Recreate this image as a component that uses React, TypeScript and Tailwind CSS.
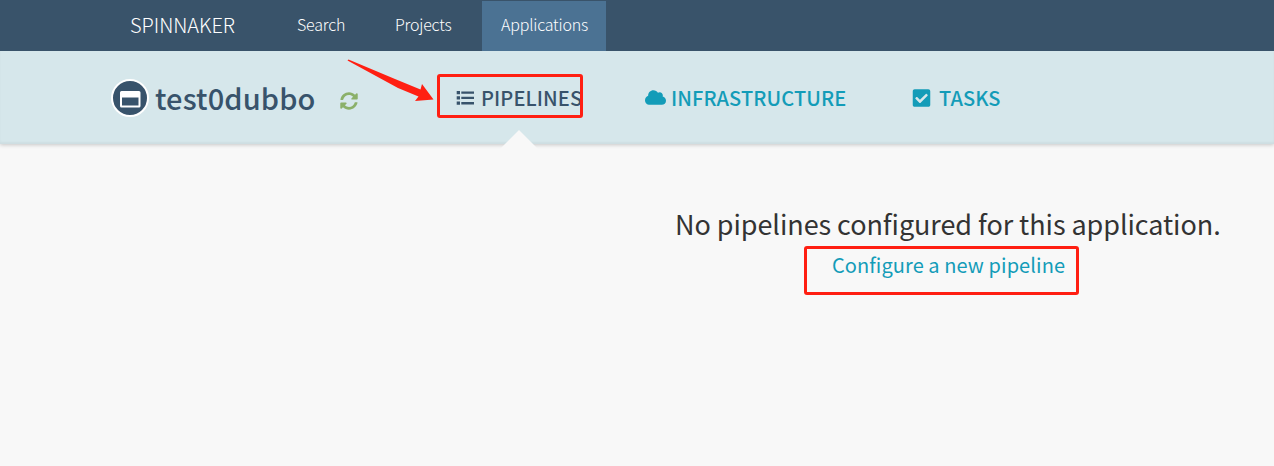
import React from "react";
import { FaCheckSquare, FaCloud, FaSyncAlt } from "react-icons/fa";

function AppIcon() {
  return (
    <svg viewBox="0 0 38 38" className="h-[38px] w-[38px] shrink-0">
      <circle cx="19" cy="19" r="18" fill="#38536b" stroke="#fff" strokeWidth="2" />
      <path
        fillRule="evenodd"
        fill="#fff"
        d="M10.500 12h17.500a1.500 1.500 0 0 1 1.500 1.500v13.500a1.500 1.500 0 0 1-1.500 1.500h-17.500a1.500 1.500 0 0 1-1.500-1.500v-13.500a1.500 1.500 0 0 1 1.500-1.500zM11 18.500v8h16.500v-8z"
      />
    </svg>
  );
}

function ListIcon() {
  return (
    <svg viewBox="0 0 18 14" className="h-[14px] w-[18px]" fill="currentColor">
      <path d="M.7 0H4v3.200H.7zM.7 5.300H4v3.200H.7zM.7 10.600H4v3.200H.7zM5.300 .4H18v2.400H5.300zM5.300 5.700H18v2.400H5.300zM5.300 11H18v2.400H5.300z" />
    </svg>
  );
}

function TopBar() {
  return (
    <header className="relative z-10 flex h-[51px] items-stretch bg-[#39536a] text-[16px] font-light leading-[49px] text-white">
      <div className="ml-[130px] w-[167px] text-[20px] tracking-[-0.05px]">SPINNAKER</div>
      <nav className="flex">
        <a className="w-[98px] tracking-[-0.2px]">Search</a>
        <a className="w-[87px] tracking-[-0.2px]">Projects</a>
        <a className="mt-px w-[124px] bg-[#4b7293] pl-[19px] leading-[47px] tracking-[-0.2px]">Applications</a>
      </nav>
    </header>
  );
}

function AppHeader() {
  return (
    <section className="relative flex h-[93px] items-center bg-[#d6e7eb] text-[20px] font-medium leading-[30px] text-[#139cb8] shadow-[0_1px_4px_rgba(0,0,0,0.2),inset_0_-2px_2px_rgba(0,0,0,0.04)]">
      <div className="ml-[111px] flex w-[345px] items-center text-[#38536b]">
        <AppIcon />
        <h1 className="mb-[2px] ml-[6px] w-[185px] whitespace-nowrap text-[29px] tracking-[0.12px]">test0dubbo</h1>
        <FaSyncAlt className="mt-[6px] h-[18px] w-[18px] text-[#8bb069]" />
      </div>
      <nav className="flex whitespace-nowrap tracking-[0.1px]">
        <a className="flex w-[189px] items-center text-[#38536b]">
          <ListIcon />
          <span className="ml-[7px]">PIPELINES</span>
        </a>
        <a className="flex w-[267px] items-center">
          <FaCloud className="h-[21px] w-[21px]" />
          <span className="ml-[5px]">INFRASTRUCTURE</span>
        </a>
        <a className="flex items-center">
          <FaCheckSquare className="mt-px h-5 w-[19px]" />
          <span className="ml-[8px]">TASKS</span>
        </a>
      </nav>
      <svg viewBox="0 0 38 19" className="absolute left-[500px] top-[79px] h-[19px] w-[38px]">
        <path d="M0 19L19 0l19 19z" fill="#f8f8f8" />
      </svg>
    </section>
  );
}

function Annotations() {
  return (
    <>
      <div className="absolute left-[437px] top-[74px] h-[44px] w-[146px] rounded-[3px] border-[3px] border-[#ff1f12]" />
      <div className="absolute left-[804px] top-[246px] h-[49px] w-[275px] rounded-[3px] border-[3px] border-[#ff1f12]" />
      <svg viewBox="0 0 90 44" className="absolute left-[345px] top-[58px] h-[44px] w-[90px]">
        <path d="M2.500 2.500L3.500 1.500L50 21L75.500 31.500L77 26L88.500 41.500L70 43L73.500 38.500L53 30Z" fill="#ff1f12" />
      </svg>
    </>
  );
}

export default function App() {
  return (
    <div className="relative h-[466px] w-[1274px] overflow-hidden bg-[#f8f8f8] font-['Noto_Sans_CJK_SC','Noto_Sans',sans-serif]">
      <TopBar />
      <AppHeader />
      <main className="ml-[675px] w-[547px] pt-[60px] text-center">
        <h2 className="whitespace-nowrap text-left text-[27px] leading-[40px] tracking-[-0.07px] text-[#333]">
          No pipelines configured for this application.
        </h2>
        <a className="block text-[20px] leading-[42px] tracking-[0.09px] text-[#139cb8]">Configure a new pipeline</a>
      </main>
      <Annotations />
    </div>
  );
}
